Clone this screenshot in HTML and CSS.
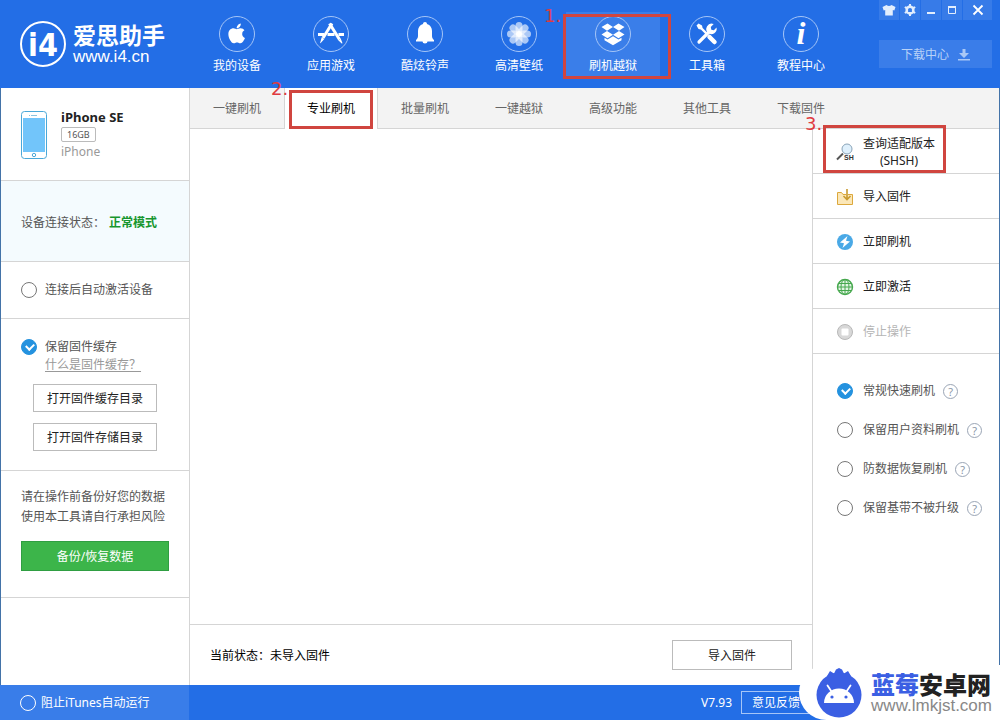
FILE: index.html
```html
<!DOCTYPE html>
<html lang="zh-CN">
<head>
<meta charset="utf-8">
<meta name="viewport" content="width=device-width, initial-scale=1">
<title>爱思助手</title>
<link rel="stylesheet" href="styles.css">
</head>
<body>
<div class="app">
  <header class="header">
    <div class="brand">
      <svg class="brand-logo" viewBox="0 0 46 46" aria-hidden="true">
        <circle cx="23" cy="23" r="22" fill="none" stroke="#fff" stroke-width="2"/>
        <text class="brand-mark" x="23" y="35" text-anchor="middle">i4</text>
      </svg>
      <div class="brand-text">
        <span class="brand-name">爱思助手</span>
        <span class="brand-url">www.i4.cn</span>
      </div>
    </div>
    <nav class="nav">
      <a class="nav-item" href="#">
        <svg class="nav-icon" viewBox="0 0 38 38"><circle class="ring" cx="19" cy="19" r="17.5"/><path fill="#fff" transform="translate(10.2 7.2) scale(.044)" d="M318.7 268.7c-.2-36.7 16.4-64.4 50-84.8-18.8-26.9-47.2-41.7-84.7-44.6-35.5-2.8-74.3 20.7-88.5 20.7-15 0-49.4-19.7-76.4-19.7C63.3 141.2 4 184.8 4 273.5q0 39.3 14.4 81.2c12.8 36.7 59 126.7 107.2 125.2 25.2-.6 43-17.9 75.8-17.9 31.8 0 48.3 17.9 76.4 17.9 48.6-.7 90.4-82.5 102.6-119.3-65.2-30.7-61.7-90-61.7-91.9zm-56.6-164.2c27.3-32.4 24.8-61.9 24-72.5-24.1 1.4-52 16.4-67.9 34.9-17.5 19.8-27.8 44.3-25.6 71.9 26.1 2 49.9-11.4 69.5-34.3z"/></svg>
        <span>我的设备</span>
      </a>
      <a class="nav-item" href="#">
        <svg class="nav-icon" viewBox="0 0 38 38"><circle class="ring" cx="19" cy="19" r="17.5"/><g fill="none" stroke="#fff" stroke-width="3"><path d="M20 8.500L11 23"/><path d="M17.500 8.500L27.500 24.500"/><path d="M6 19.500h6M15.500 19.500h7M26.500 19.500h5.500"/></g><path fill="#fff" d="M9.700 22.300l2.600 1.600-3.800 4.400-.4-.3zM26.200 25.300l2.600-1.600 1.700 4.600-.8.300z"/></svg>
        <span>应用游戏</span>
      </a>
      <a class="nav-item" href="#">
        <svg class="nav-icon" viewBox="0 0 38 38"><circle class="ring" cx="19" cy="19" r="17.5"/><path fill="#fff" d="M19 7c1.200 0 2 .8 2 2 3.400.9 5 3.800 5 7v5c0 1.800.8 3 2 4v1.500H10V25c1.200-1 2-2.200 2-4v-5c0-3.200 1.600-6.100 5-7 0-1.200.8-2 2-2zM16.500 26.500h5a2.500 2 0 0 1-5 0z"/></svg>
        <span>酷炫铃声</span>
      </a>
      <a class="nav-item" href="#">
        <svg class="nav-icon" viewBox="0 0 38 38"><circle class="ring" cx="19" cy="19" r="17.5"/><g fill="#fff" fill-opacity=".62"><rect x="15.500" y="7" width="7" height="11" rx="3.500"/><rect x="15.500" y="20" width="7" height="11" rx="3.500"/><rect x="7" y="15.500" width="11" height="7" rx="3.500"/><rect x="20" y="15.500" width="11" height="7" rx="3.500"/><g transform="rotate(45 19 19)"><rect x="15.500" y="7" width="7" height="11" rx="3.500"/><rect x="15.500" y="20" width="7" height="11" rx="3.500"/><rect x="7" y="15.500" width="11" height="7" rx="3.500"/><rect x="20" y="15.500" width="11" height="7" rx="3.500"/></g></g><circle cx="19" cy="19" r="3" fill="#fff"/></svg>
        <span>高清壁纸</span>
      </a>
      <a class="nav-item active" href="#">
        <svg class="nav-icon" viewBox="0 0 38 38"><circle class="ring" cx="19" cy="19" r="17.5"/><path fill="#fff" d="M13.500 8.500L19 12l-6 3.800L7.500 12zM24.500 8.500L19 12l6 3.800 5.500-3.800zM7.500 19.500L13 16l6 3.800-5.500 3.400zM30.500 19.500L25 16l-6 3.800 5.500 3.400zM10.500 22.700l3 1.900 5.500-3.400 5.500 3.400 3-1.900v2.500L19 30.300l-8.500-5.100z"/></svg>
        <span>刷机越狱</span>
        <span class="mark mark-nav"><b class="mark-no">1.</b></span>
      </a>
      <a class="nav-item" href="#">
        <svg class="nav-icon" viewBox="0 0 38 38"><circle class="ring" cx="19" cy="19" r="17.5"/><g stroke="#fff" fill="none"><path stroke-width="2.400" d="M11 11l8 8"/><path stroke-width="4.500" stroke-linecap="round" d="M21.500 22l5 5"/><path stroke-width="3.200" stroke-linecap="round" d="M11 27l11-11"/></g><path fill="#fff" d="M8.500 10.500l2-2 3.500 2 .5 2-2 2-2-.5z"/><path fill="#fff" d="M28.500 12.500a5.300 5.300 0 0 1-8.200 5.600 5.300 5.300 0 0 1 5.400-9l-2.900 3 .5 2.700 2.600.5z"/></svg>
        <span>工具箱</span>
      </a>
      <a class="nav-item" href="#">
        <svg class="nav-icon" viewBox="0 0 38 38"><circle class="ring" cx="19" cy="19" r="17.5"/><text class="info-mark" x="19" y="29" text-anchor="middle">i</text></svg>
        <span>教程中心</span>
      </a>
    </nav>
    <div class="header-side">
      <div class="window-tools">
        <button class="tool" aria-label="皮肤"><svg viewBox="0 0 14 14"><path fill="#e3eefd" d="M4.500 2Q7 4 9.500 2L13.500 4 12.300 7.500 10.800 7V12.500H3.200V7L1.700 7.500.500 4z"/></svg></button>
        <button class="tool" aria-label="设置"><svg viewBox="0 0 14 14"><path fill="none" stroke="#e3eefd" stroke-width="2.600" d="M7 3.300l3.200 1.800v3.800L7 10.700 3.800 8.900V5.100z"/><path stroke="#e3eefd" stroke-width="2" d="M7 1v2M7 11v2M1.800 4l1.700 1M10.500 9l1.700 1M1.800 10l1.700-1M10.500 5l1.700-1"/></svg></button>
        <button class="tool" aria-label="最小化"><svg viewBox="0 0 14 14"><path fill="#e3eefd" d="M3 9h8v2H3z"/></svg></button>
        <button class="tool" aria-label="最大化"><svg viewBox="0 0 14 14"><path fill="none" stroke="#e3eefd" d="M3.500 3.500h7v7h-7z"/><path fill="#e3eefd" d="M3 3h8v2H3z"/></svg></button>
        <button class="tool tool-close" aria-label="关闭"><svg viewBox="0 0 14 14"><path stroke="#fff" stroke-width="1.800" d="M2.500 2.500l9 9M11.500 2.500l-9 9"/></svg></button>
      </div>
      <button class="download">下载中心<svg viewBox="0 0 12 12" aria-hidden="true"><path fill="#a9c8f6" d="M4.500 0h3v4H11L6 9 1 4h3.500zM0 10h12v1.500H0z"/></svg></button>
    </div>
  </header>

  <div class="body">
    <aside class="sidebar">
      <section class="device">
        <svg class="phone" viewBox="0 0 26 48" aria-hidden="true"><rect x=".5" y=".5" width="25" height="47" rx="3" fill="#fff" stroke="#4aa8d8"/><rect x="2" y="7" width="22" height="34" fill="#72c5fa"/><circle cx="13" cy="44" r="1.700" fill="none" stroke="#4aa8d8"/><path stroke="#8ac4e0" d="M10 4.500h6M8 4.500h1"/></svg>
        <div class="device-info">
          <strong class="device-name">iPhone SE</strong>
          <span class="device-size">16GB</span>
          <span class="device-type">iPhone</span>
        </div>
      </section>
      <section class="status"><span>设备连接状态<span class="punct">：</span></span><strong>正常模式</strong></section>
      <section class="auto"><label class="choice"><input type="checkbox">连接后自动激活设备</label></section>
      <section class="cache">
        <label class="choice"><input type="checkbox" checked>保留固件缓存</label>
        <a class="cache-help" href="#">什么是固件缓存<span class="punct">？</span></a>
        <button class="btn">打开固件缓存目录</button>
        <button class="btn">打开固件存储目录</button>
      </section>
      <section class="backup">
        <p>请在操作前备份好您的数据<br>使用本工具请自行承担风险</p>
        <button class="btn-green">备份/恢复数据</button>
      </section>
    </aside>

    <div class="content">
      <nav class="tabs">
        <a class="tab" href="#">一键刷机</a>
        <a class="tab current" href="#">专业刷机<span class="mark mark-tab"><b class="mark-no">2.</b></span></a>
        <a class="tab" href="#">批量刷机</a>
        <a class="tab" href="#">一键越狱</a>
        <a class="tab" href="#">高级功能</a>
        <a class="tab" href="#">其他工具</a>
        <a class="tab" href="#">下载固件</a>
      </nav>
      <div class="work">
        <main class="main">
          <div class="canvas"></div>
          <div class="state"><span>当前状态<span class="punct">：</span>未导入固件</span><button class="btn btn-import">导入固件</button></div>
        </main>
        <aside class="panel">
          <button class="action">
            <svg viewBox="0 0 18 18" aria-hidden="true"><path stroke="#555" stroke-width="2" d="M7 10.500l-6 6"/><circle cx="11" cy="6" r="5" fill="#dff0fc" stroke="#8aa4b8"/><text class="sh-mark" x="8" y="17">SH</text></svg>
            <span class="two-line">查询适配版本<br>(SHSH)</span>
            <span class="mark mark-action"><b class="mark-no">3.</b></span>
          </button>
          <button class="action">
            <svg viewBox="0 0 18 18" aria-hidden="true"><path fill="#fbe7b8" stroke="#dca83c" d="M1.500 4.500h4l1.500 2h3M12 6.500h4.500v10h-15v-12"/><path fill="none" stroke="#c99a2e" stroke-width="1.600" d="M11 1v10M7.500 8l3.500 3.500L14.500 8"/></svg>
            <span>导入固件</span>
          </button>
          <button class="action">
            <svg viewBox="0 0 18 18" aria-hidden="true"><circle cx="9" cy="9" r="8" fill="#4aa9e6"/><path fill="#fff" d="M11.500 3L4 9.500l4 .7L6.500 15 14 8.500l-4-.7z"/></svg>
            <span>立即刷机</span>
          </button>
          <button class="action">
            <svg viewBox="0 0 18 18" aria-hidden="true"><g fill="none" stroke="#46a84e"><circle cx="9" cy="9" r="7.500" fill="#e3f5e4" stroke-width="1.400"/><ellipse cx="9" cy="9" rx="4" ry="7.500"/><path d="M9 1.500v15M1.500 9h15M2.500 5.500h13M2.500 12.500h13"/></g></svg>
            <span>立即激活</span>
          </button>
          <button class="action" disabled>
            <svg viewBox="0 0 18 18" aria-hidden="true"><circle cx="9" cy="9" r="7.500" fill="#d8d8d8" stroke="#b8b8b8"/><rect x="5.500" y="5.500" width="7" height="7" rx="1" fill="#fff"/></svg>
            <span>停止操作</span>
          </button>
          <div class="modes">
            <div class="mode"><label class="choice"><input type="radio" name="mode" checked>常规快速刷机</label><button class="help">?</button></div>
            <div class="mode"><label class="choice"><input type="radio" name="mode">保留用户资料刷机</label><button class="help">?</button></div>
            <div class="mode"><label class="choice"><input type="radio" name="mode">防数据恢复刷机</label><button class="help">?</button></div>
            <div class="mode"><label class="choice"><input type="radio" name="mode">保留基带不被升级</label><button class="help">?</button></div>
          </div>
        </aside>
      </div>
    </div>
  </div>

  <footer class="footer">
    <div class="footer-left"><label class="choice"><input type="checkbox">阻止iTunes自动运行</label></div>
    <div class="footer-right"><span>V7.93</span><button class="feedback">意见反馈</button></div>
  </footer>

  <div class="badge">
    <svg class="badge-logo" viewBox="0 0 46 50" aria-hidden="true"><path fill="#3b5fe3" d="M11 8l3-5 4 2.500 2-4 3-1.500 3 1.500 2 4L32 3l3 5z"/><circle cx="23" cy="27" r="22.500" fill="#3b5fe3"/><path fill="#fff" d="M8 35a15 14.500 0 0 1 30 0z"/><path stroke="#fff" stroke-width="1.800" stroke-linecap="round" d="M11.500 17.500l4 6M34.500 17.500l-4 6"/><circle cx="16" cy="29" r="1.600" fill="#3b5fe3"/><circle cx="30" cy="29" r="1.600" fill="#3b5fe3"/></svg>
    <div class="badge-text">
      <span class="badge-name"><em>蓝莓</em>安卓网</span>
      <span class="badge-url">www.lmkjst.com</span>
    </div>
  </div>
</div>
</body>
</html>
```

FILE: styles.css
```css
* { box-sizing: border-box; }

body {
  margin: 0;
  font: 12px/18px "Noto Sans", "Noto Sans CJK SC", sans-serif;
  color: #555;
  background: #fff;
}

a { color: inherit; text-decoration: none; }
button { margin: 0; padding: 0; font: inherit; color: inherit; background: none; border: 0; cursor: pointer; }
p { margin: 0; }
.punct { font-family: "Noto Sans CJK TC", sans-serif; }

.app { position: relative; display: flex; flex-direction: column; min-height: 100vh; overflow: hidden; }

/* header */
.header { display: flex; height: 88px; background: #236ee6; color: #fff; }
.brand { display: flex; align-items: center; gap: 7px; width: 190px; padding-left: 20px; flex: none; }
.brand-logo { width: 46px; height: 46px; }
.brand-mark { font: bold 32px "Liberation Sans Narrow", "DejaVu Sans Condensed", sans-serif; fill: #fff; }
.brand-text { display: flex; flex-direction: column; }
.brand-name { font-size: 23px; line-height: 26px; font-weight: 700; }
.brand-url { font: 17px/18px "Liberation Sans", sans-serif; }

.nav { display: flex; padding-top: 12px; }
.nav-item { position: relative; display: flex; flex-direction: column; align-items: center; gap: 4px; width: 94px; height: 64px; padding-top: 3px; }
.nav-item.active { background: #3a7ee9; }
.nav-icon { width: 38px; height: 38px; }
.ring { fill: none; stroke: #a5c5f7; stroke-width: 1; }
.info-mark { font: italic bold 32px "Liberation Serif", serif; fill: #fff; }

.header-side { display: flex; flex-direction: column; gap: 20px; width: 113px; margin: 0 8px 0 auto; }
.window-tools { display: flex; gap: 1px; }
.tool { display: flex; align-items: center; justify-content: center; width: 20px; height: 20px; background: #377be8; }
.tool svg { width: 14px; height: 14px; }
.tool-close { flex: 1; }
.download { display: flex; align-items: center; justify-content: center; gap: 9px; height: 28px; padding-top: 2px; background: #3a7de9; color: #b9d2f8; }
.download svg { width: 12px; height: 12px; }

/* body */
.body { display: flex; flex: 1; border: solid #4373a8; border-width: 0 1px; }
.sidebar { flex: none; width: 189px; border-right: 1px solid #d5d5d5; }
.sidebar section { padding: 0 20px; border-bottom: 1px solid #d5d5d5; }
.sidebar .device { display: flex; align-items: center; gap: 14px; height: 93px; padding-top: 1px; }
.phone { width: 26px; height: 48px; }
.device-info { display: flex; flex-direction: column; align-items: flex-start; }
.device-name { font-size: 13px; line-height: 18px; color: #222; }
.device-size { margin: 1px 0; padding: 0 5px; border: 1px solid #bbb; border-radius: 2px; font-size: 9px; line-height: 13px; }
.device-type { line-height: 18px; color: #999; }
.sidebar .status { display: flex; align-items: center; height: 81px; padding-top: 3px; background: #f4fbfe; }
.status strong { margin-left: 4px; color: #17962e; }
.sidebar .auto { display: flex; align-items: center; height: 57px; }
.sidebar .cache { display: flex; flex-direction: column; padding-top: 19px; height: 152px; }
.cache-help { margin: -1px 0 10px 24px; color: #999; text-decoration: underline; text-underline-offset: 2px; align-self: flex-start; }
.btn { height: 28px; padding-top: 1px; border: 1px solid #bbb; background: #fff; color: #222; }
.cache .btn { width: 124px; margin: 0 0 11px 12px; }
.sidebar .backup { padding-top: 16px; height: 127px; }
.backup p { line-height: 20px; }
.btn-green { width: 100%; height: 30px; margin-top: 14px; padding-top: 1px; border: 1px solid #2f9e42; background: #3cb54a; color: #fff; }

/* checkboxes and radios */
.choice { display: flex; align-items: center; gap: 8px; white-space: nowrap; }
.choice input { appearance: none; position: relative; flex: none; width: 16px; height: 16px; margin: 0; border: 1px solid #777; border-radius: 50%; background: transparent; }
.choice input:checked { border-color: #2492df; background: #2492df; }
.choice input:checked::after { content: ""; position: absolute; left: 4px; top: 3px; width: 6px; height: 4px; border: solid #fff; border-width: 0 0 2px 2px; transform: rotate(-45deg); }

/* tabs */
.content { display: flex; flex-direction: column; flex: 1; min-width: 0; }
.tabs { display: flex; height: 41px; background: #f3f3f3; border-bottom: 1px solid #d5d5d5; color: #666; }
.tab { position: relative; width: 94px; line-height: 42px; text-align: center; }
.tab.current { height: 41px; background: #fff; color: #000; box-shadow: inset 1px 0 #d5d5d5, inset -1px 0 #d5d5d5; }

/* work area */
.work { display: flex; flex: 1; }
.main { display: flex; flex-direction: column; flex: 1; }
.canvas { flex: 1; }
.state { display: flex; align-items: center; justify-content: space-between; height: 61px; padding: 0 20px; border-top: 1px solid #d5d5d5; color: #000; }
.btn-import { width: 120px; height: 30px; }

.panel { width: 187px; border-left: 1px solid #d5d5d5; }
.action { position: relative; display: flex; align-items: center; gap: 9px; width: 100%; height: 45px; padding: 1px 0 0 23px; border-bottom: 1px solid #d5d5d5; color: #222; }
.action svg { width: 18px; height: 18px; }
.action:disabled { color: #b5b5b5; }
.two-line { line-height: 17px; text-align: center; }
.sh-mark { font: bold 7px "Liberation Sans", sans-serif; fill: #333; }
.modes { display: flex; flex-direction: column; gap: 21px; padding: 28px 0 0 24px; }
.mode { display: flex; align-items: center; gap: 8px; }
.mode .choice { gap: 10px; }
.help { width: 15px; height: 15px; border: 1px solid #9aa5b5; border-radius: 50%; font-size: 11px; line-height: 13px; color: #8a96a8; }

/* footer */
.footer { display: flex; justify-content: space-between; height: 35px; background: #236ee6; color: #fff; }
.footer-left { display: flex; align-items: center; width: 189px; padding-left: 20px; background: #397de9; }
.footer .choice { gap: 5px; }
.footer .choice input { border-color: #fff; }
.footer-right { display: flex; align-items: center; gap: 9px; padding-right: 189px; }
.feedback { width: 70px; height: 23px; border: 1px solid #a5c5f7; }

/* numbered call-outs */
.mark { position: absolute; border: 3px solid #d0453f; pointer-events: none; z-index: 1; }
.mark-no { position: absolute; font: 18px/14px "DejaVu Sans", sans-serif; color: #e03a40; }
.mark-nav { inset: 2px -11px -3px -3px; }
.mark-nav .mark-no { left: -22px; top: -8px; }
.mark-tab { inset: 2px 5px 0; }
.mark-tab .mark-no { left: -21px; top: -11px; }
.mark-action { inset: -4px 53px 0 10px; }
.mark-action .mark-no { left: -21px; top: -11px; }

/* site badge */
.badge { position: absolute; right: 0; bottom: 0; display: flex; align-items: center; gap: 9px; height: 55px; padding: 0 8px 0 17px; background: #fff; border-radius: 28px 0 0 28px; z-index: 2; }
.badge-logo { width: 46px; height: 50px; }
.badge-text { display: flex; flex-direction: column; }
.badge-name { font-size: 24px; line-height: 26px; font-weight: 900; color: #222; }
.badge-name em { font-style: normal; color: #3b5fe3; }
.badge-url { font: 17px/16px "Liberation Sans", sans-serif; color: #888; }
```
